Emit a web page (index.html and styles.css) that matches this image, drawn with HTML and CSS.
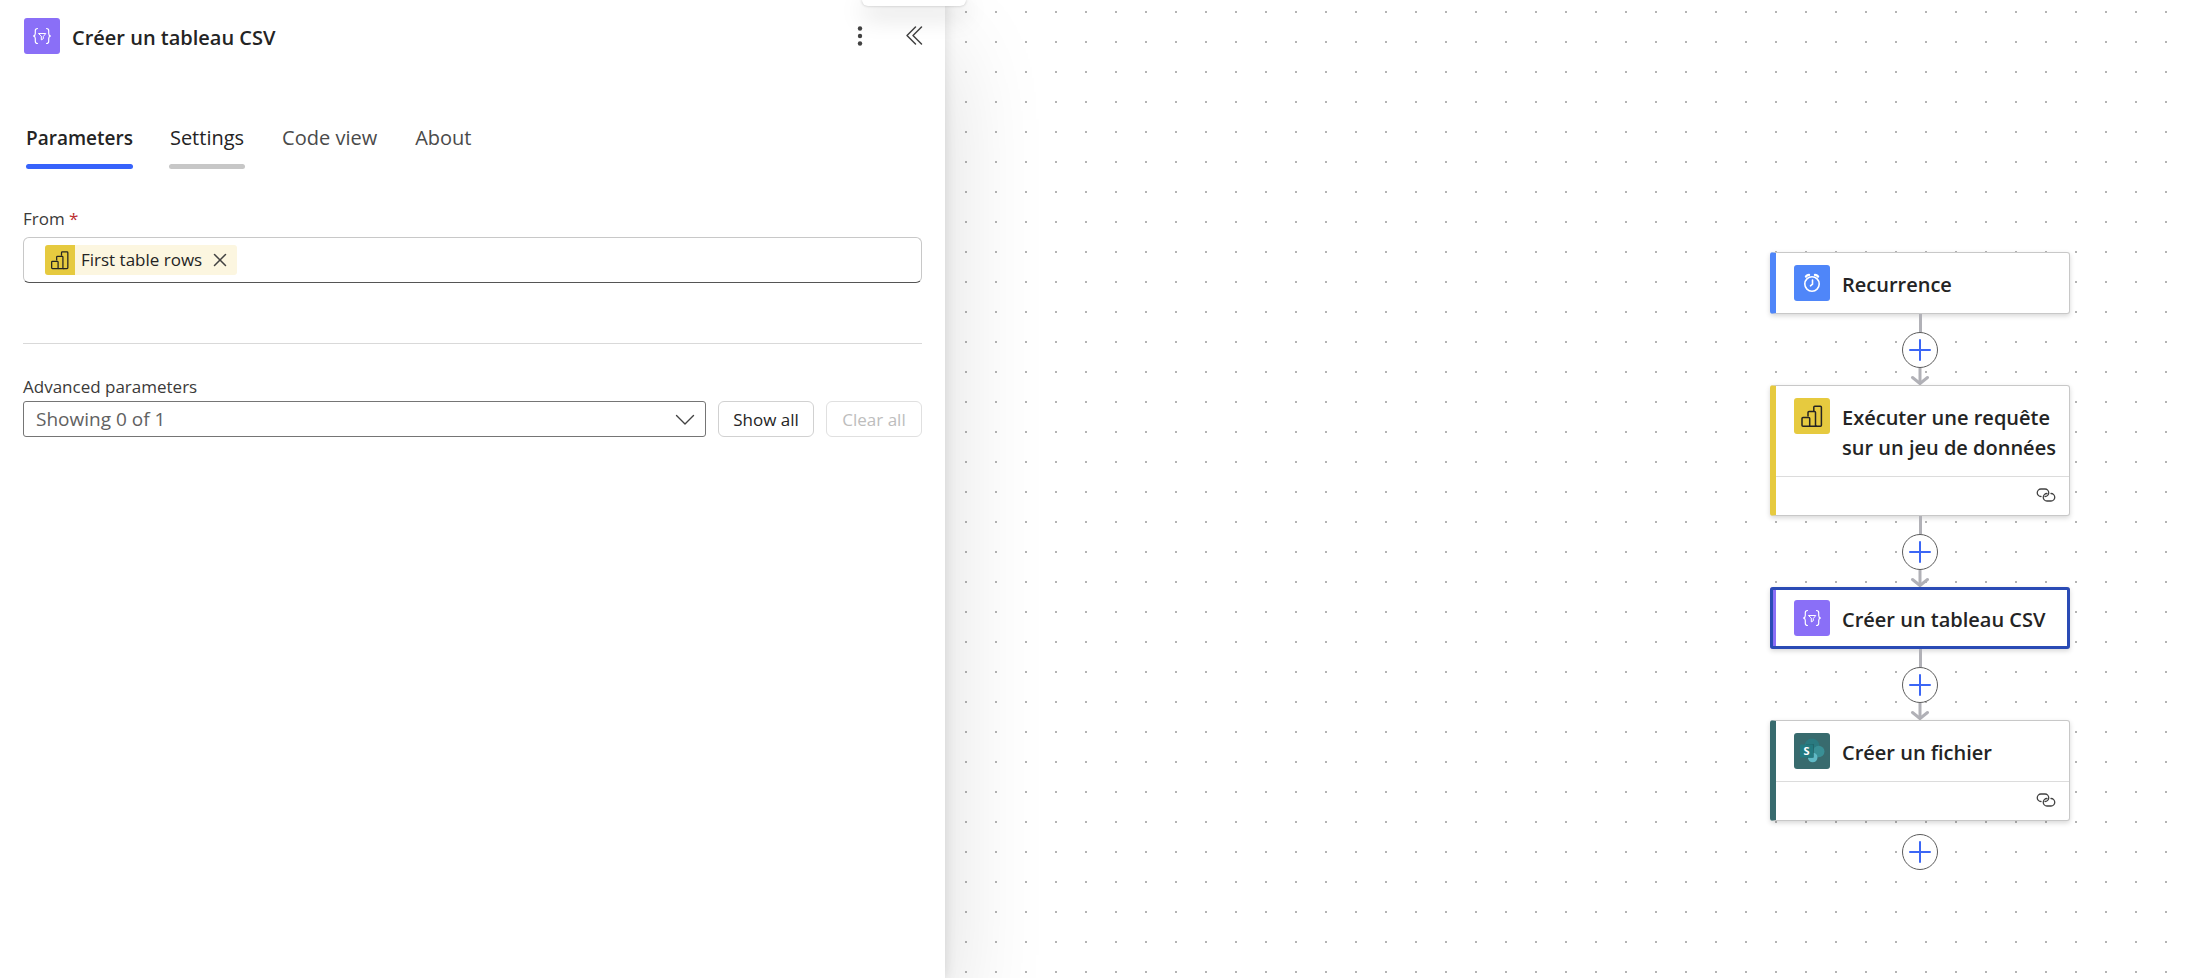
FILE: index.html
```html
<!DOCTYPE html>
<html lang="fr">
<head>
    <meta charset="UTF-8">
    <meta name="viewport" content="width=device-width, initial-scale=1.0">
    <title>Créer un tableau CSV</title>
    <link rel="stylesheet" href="styles.css">
</head>
<body>

    <!-- Icônes partagées -->
    <svg class="sprite" aria-hidden="true">
        <symbol id="icon-csv" viewBox="0 0 36 36">
            <g fill="none" stroke="#fff" stroke-linecap="round" stroke-linejoin="round">
                <path stroke-width="1.2" d="M13.500 10.500c-1.800 0-2.200.8-2.200 2.200v2.800c0 1.500-.6 2.200-1.800 2.500 1.200.3 1.800 1 1.800 2.500v2.800c0 1.400.4 2.200 2.200 2.200"/>
                <path stroke-width="1.2" d="M22.500 10.500c1.800 0 2.200.8 2.200 2.200v2.800c0 1.500.6 2.200 1.800 2.500-1.200.3-1.800 1-1.800 2.500v2.800c0 1.400-.4 2.200-2.200 2.200"/>
                <path stroke-width="1" d="M14.800 15.500h7l-2.500 3v2.200l-2 1.200v-3.400z"/>
            </g>
        </symbol>
        <symbol id="icon-powerbi" viewBox="0 0 36 36">
            <g fill="none" stroke="#252423" stroke-width="1.500" stroke-linejoin="round">
                <path d="M19.800 13V9.300q0-1 1-1h5.600q1 0 1 1v18q0 1-1 1H22"/>
                <path d="M14 18.500V14.500q0-1 1-1h5.500q1 0 1 1v13.800"/>
                <path d="M9 19.500h5.700q1 0 1 1v7.800H9q-1 0-1-1v-6.800q0-1 1-1z"/>
                <path d="M15.700 28.300H23"/>
            </g>
        </symbol>
        <symbol id="icon-clock" viewBox="0 0 36 36">
            <g fill="none" stroke="#fff" stroke-linecap="round">
                <circle cx="18" cy="19" r="7.200" stroke-width="1.600"/>
                <path stroke-width="1.600" d="M18.500 15v4.200l-2 1.600"/>
                <path stroke-width="2.400" d="M12 11.500q1.200-1.500 3-1.600M24 11.500q-1.200-1.500-3-1.600"/>
            </g>
        </symbol>
        <symbol id="icon-sharepoint" viewBox="0 0 36 36">
            <circle cx="18" cy="13" r="7.500" fill="#2b7a80"/>
            <circle cx="24.700" cy="18.500" r="5.800" fill="#398f95"/>
            <circle cx="18.700" cy="24.500" r="4.800" fill="#5fb9c5"/>
            <path fill="#1d5a5f" opacity=".6" d="M12 11h8v12.500q0 1.500-1.500 1.500H13z"/>
            <rect x="6" y="11.500" width="13" height="13" rx="1" fill="#237a80"/>
            <text x="12.500" y="22" text-anchor="middle" class="sp-letter">S</text>
        </symbol>
        <symbol id="icon-link" viewBox="0 0 20 14">
            <g fill="none" stroke="#424242" stroke-width="1.300" stroke-linecap="round">
                <path d="M5 8.500a3.750 3.750 0 0 1 0-7.500h4a3.750 3.750 0 0 1 0 7.500"/>
                <path d="M15 5.500a3.750 3.750 0 0 1 0 7.500h-4a3.750 3.750 0 0 1 0-7.500"/>
            </g>
        </symbol>
        <symbol id="icon-plus" viewBox="0 0 22 22">
            <path fill="none" stroke="#3b66f5" stroke-width="2" stroke-linecap="round" d="M11 1v20M1 11h20"/>
        </symbol>
        <symbol id="icon-arrow" viewBox="0 0 20 17">
            <g fill="none" stroke="#b1b1b7" stroke-width="3">
                <path d="M10 0v15"/>
                <path stroke-linecap="round" stroke-linejoin="round" d="M2.500 9.500l7.500 6 7.500-6"/>
            </g>
        </symbol>
    </svg>

    <div class="designer">

        <!-- Panneau de l'action -->
        <aside class="panel">
            <header class="panel-header">
                <svg class="app-icon app-icon-csv"><use href="#icon-csv"/></svg>
                <h1>Créer un tableau CSV</h1>
                <button type="button" class="icon-button" aria-label="Plus d'options">
                    <svg width="20" height="24" viewBox="0 0 20 24" fill="#424242">
                        <circle cx="10" cy="4.500" r="2.200"/>
                        <circle cx="10" cy="12" r="2.200"/>
                        <circle cx="10" cy="19.500" r="2.200"/>
                    </svg>
                </button>
                <button type="button" class="icon-button" aria-label="Réduire">
                    <svg width="20" height="24" viewBox="0 0 20 24" fill="none" stroke="#424242" stroke-width="1.500" stroke-linecap="round" stroke-linejoin="round">
                        <path d="M11.500 3L3 11.500l8.500 8.500M17.500 3L9 11.500l8.500 8.500"/>
                    </svg>
                </button>
            </header>

            <div class="tabs" role="tablist">
                <button type="button" role="tab" class="tab tab-selected" aria-selected="true">Parameters</button>
                <button type="button" role="tab" class="tab tab-hover">Settings</button>
                <button type="button" role="tab" class="tab">Code view</button>
                <button type="button" role="tab" class="tab">About</button>
            </div>

            <form class="parameters">
                <label for="from">From <span class="required">*</span></label>
                <div class="token-field">
                    <span class="token">
                        <svg class="token-icon"><use href="#icon-powerbi"/></svg>
                        <span class="token-text">First table rows</span>
                        <button type="button" class="token-remove" aria-label="Supprimer">
                            <svg width="14" height="14" viewBox="0 0 14 14" fill="none" stroke="#424242" stroke-width="1.500" stroke-linecap="round">
                                <path d="M1.500 1.500l11 11M12.500 1.500l-11 11"/>
                            </svg>
                        </button>
                    </span>
                    <input type="text" id="from">
                </div>

                <hr>

                <label for="advanced">Advanced parameters</label>
                <div class="advanced-row">
                    <div class="select-box">
                        <select id="advanced">
                            <option>Showing 0 of 1</option>
                        </select>
                        <svg class="chevron" width="20" height="12" viewBox="0 0 20 12" fill="none" stroke="#424242" stroke-width="1.400" stroke-linecap="round" stroke-linejoin="round">
                            <path d="M1.500 1.500L10 10l8.500-8.500"/>
                        </svg>
                    </div>
                    <button type="button" class="button">Show all</button>
                    <button type="button" class="button" disabled>Clear all</button>
                </div>
            </form>
        </aside>

        <!-- Flux -->
        <main class="canvas">
            <div class="flow">
                <article class="card card-recurrence">
                    <div class="card-title">
                        <svg class="app-icon app-icon-recurrence"><use href="#icon-clock"/></svg>
                        <h2>Recurrence</h2>
                    </div>
                </article>

                <div class="connector">
                    <button type="button" class="add" aria-label="Ajouter"><svg><use href="#icon-plus"/></svg></button>
                    <svg class="arrow"><use href="#icon-arrow"/></svg>
                </div>

                <article class="card card-powerbi">
                    <div class="card-title">
                        <svg class="app-icon app-icon-powerbi"><use href="#icon-powerbi"/></svg>
                        <h2>Exécuter une requête sur un jeu de données</h2>
                    </div>
                    <div class="card-footer"><svg class="link-icon"><use href="#icon-link"/></svg></div>
                </article>

                <div class="connector">
                    <button type="button" class="add" aria-label="Ajouter"><svg><use href="#icon-plus"/></svg></button>
                    <svg class="arrow"><use href="#icon-arrow"/></svg>
                </div>

                <article class="card card-csv card-selected">
                    <div class="card-title">
                        <svg class="app-icon app-icon-csv"><use href="#icon-csv"/></svg>
                        <h2>Créer un tableau CSV</h2>
                    </div>
                </article>

                <div class="connector">
                    <button type="button" class="add" aria-label="Ajouter"><svg><use href="#icon-plus"/></svg></button>
                    <svg class="arrow"><use href="#icon-arrow"/></svg>
                </div>

                <article class="card card-sharepoint">
                    <div class="card-title">
                        <svg class="app-icon app-icon-sharepoint"><use href="#icon-sharepoint"/></svg>
                        <h2>Créer un fichier</h2>
                    </div>
                    <div class="card-footer"><svg class="link-icon"><use href="#icon-link"/></svg></div>
                </article>

                <button type="button" class="add add-last" aria-label="Ajouter"><svg><use href="#icon-plus"/></svg></button>
            </div>
        </main>

        <!-- Bas de l'info-bulle de la barre d'outils -->
        <div class="tooltip-edge"></div>
    </div>

</body>
</html>
```

FILE: styles.css
```css
* {
    box-sizing: border-box;
}
body {
    margin: 0;
    font-family: 'Open Sans', 'Noto Sans', sans-serif;
    color: #242424;
    background-color: #ffffff;
}
button, input, select {
    font-family: inherit;
    color: inherit;
}
button {
    padding: 0;
    border: none;
    background: none;
    cursor: pointer;
}
h1, h2 {
    margin: 0;
    font-size: 20px;
    font-weight: 600;
    line-height: 30px;
}
.sprite {
    display: none;
}
.designer {
    position: relative;
    display: flex;
    min-height: 100vh;
    overflow: hidden;
}

/* Panneau */
.panel {
    position: relative;
    z-index: 1;
    flex: 0 0 945px;
    padding: 18px 23px;
    background-color: #ffffff;
    box-shadow: 0 0 12px rgba(0, 0, 0, 0.12), 0 48px 96px rgba(0, 0, 0, 0.14);
}
.panel-header {
    display: flex;
    align-items: center;
    padding-left: 1px;
}
.panel-header h1 {
    flex: 1;
    padding: 3px 0 0 12px;
}
.icon-button {
    display: flex;
    justify-content: center;
    width: 32px;
    margin-left: 22px;
}
.icon-button:last-child {
    margin-right: -8px;
}
.app-icon {
    flex: none;
    width: 36px;
    height: 36px;
    border-radius: 3px;
}
.app-icon-csv {
    background-color: #8a6ff7;
}
.app-icon-recurrence {
    background-color: #4f86f9;
}
.app-icon-powerbi {
    background-color: #e6ca3f;
}
.app-icon-sharepoint {
    background-color: #386b6e;
}
.sp-letter {
    font-size: 11px;
    font-weight: 700;
    fill: #ffffff;
}

/* Onglets */
.tabs {
    display: flex;
    gap: 36px;
    margin-top: 68px;
    padding-left: 3px;
}
.tab {
    position: relative;
    height: 47px;
    padding: 0 1px 16px;
    font-size: 20px;
    line-height: 26px;
    color: #4a4a4a;
}
.tab::after {
    content: "";
    position: absolute;
    left: 0;
    right: 0;
    bottom: 0;
    height: 5px;
    border-radius: 3px;
}
.tab-selected {
    padding: 0 0 16px;
    font-size: 19px;
    font-weight: 600;
    color: #242424;
}
.tab-selected::after {
    background-color: #3763fb;
}
.tab-hover {
    color: #242424;
}
.tab-hover::after {
    background-color: #c7c7c7;
}

/* Paramètres */
.parameters {
    margin-top: 38px;
}
.parameters label {
    display: block;
    font-size: 17px;
    line-height: 24px;
    color: #3b3a39;
}
.required {
    color: #bc2f32;
}
.token-field {
    display: flex;
    align-items: center;
    height: 46px;
    margin-top: 6px;
    padding-left: 21px;
    border: 1px solid #c8c8c8;
    border-bottom-color: #555555;
    border-radius: 6px;
}
.token-field input {
    flex: 1;
    height: 30px;
    border: none;
    outline: none;
    font-size: 17px;
    background: none;
}
.token {
    display: flex;
    align-items: center;
    height: 30px;
    border-radius: 3px;
    background-color: #fcf6e0;
    overflow: hidden;
}
.token-icon {
    width: 30px;
    height: 30px;
    background-color: #e6ca3f;
}
.token-text {
    padding-left: 6px;
    font-size: 17px;
    line-height: 24px;
}
.token-remove {
    display: flex;
    justify-content: center;
    width: 35px;
}
hr {
    margin: 60px 0 31px;
    border: none;
    border-top: 1px solid #d9d9d9;
}
.advanced-row {
    display: flex;
    gap: 12px;
    margin-top: 2px;
}
.select-box {
    position: relative;
    flex: 1;
}
.select-box select {
    display: block;
    width: 100%;
    height: 36px;
    padding: 0 48px 0 12px;
    border: 1px solid #757575;
    border-radius: 3px;
    appearance: none;
    font-size: 19px;
    color: #616161;
    background-color: #ffffff;
}
.chevron {
    position: absolute;
    top: 13px;
    right: 11px;
    pointer-events: none;
}
.button {
    width: 96px;
    height: 36px;
    border: 1px solid #d1d1d1;
    border-radius: 6px;
    font-size: 17px;
    background-color: #ffffff;
}
.button:disabled {
    border-color: #e0e0e0;
    color: #bdbdbd;
    cursor: default;
}

/* Zone de dessin à points */
.canvas {
    display: flex;
    flex: 1;
    justify-content: flex-end;
    padding: 252px 124px 40px 0;
    background-image: radial-gradient(circle at 1px 1px, #b4b4b4 1px, transparent 1px);
    background-size: 30px 30px;
    background-position: 20px 11px;
}
.flow {
    display: flex;
    flex-direction: column;
    align-items: center;
    width: 300px;
}
.card {
    width: 100%;
    border: 1px solid #c8c8c8;
    border-left: 6px solid #c8c8c8;
    border-radius: 3px;
    background-color: #ffffff;
    box-shadow: 0 2px 5px rgba(0, 0, 0, 0.16);
}
.card-recurrence {
    border-left-color: #4f86f9;
}
.card-powerbi {
    border-left-color: #e6ca3f;
}
.card-csv {
    border-left-color: #8a6ff7;
}
.card-sharepoint {
    border-left-color: #386b6e;
}
.card-selected {
    outline: 3px solid #2a4bb5;
    outline-offset: -3px;
}
.card-title {
    display: flex;
    gap: 12px;
    padding: 12px 6px 12px 18px;
}
.card-title h2 {
    padding: 5px 0 1px;
}
.card-footer {
    display: flex;
    justify-content: flex-end;
    padding: 11px 13px 13px 0;
    border-top: 1px solid #dcdcdc;
}
.link-icon {
    width: 20px;
    height: 14px;
}

/* Liaisons entre les cartes */
.connector {
    display: flex;
    flex-direction: column;
    align-items: center;
    width: 100%;
    height: 71px;
}
.connector::before {
    content: "";
    width: 3px;
    height: 18px;
    background-color: #b1b1b7;
}
.add {
    display: flex;
    align-items: center;
    justify-content: center;
    width: 36px;
    height: 36px;
    border: 1px solid #5c5c5c;
    border-radius: 50%;
    background-color: #ffffff;
}
.add svg {
    width: 22px;
    height: 22px;
}
.arrow {
    width: 20px;
    height: 17px;
}
.add-last {
    margin-top: 13px;
}

.tooltip-edge {
    position: absolute;
    z-index: 2;
    top: 0;
    left: 862px;
    width: 104px;
    height: 6px;
    border-radius: 0 0 6px 6px;
    background-color: #ffffff;
    box-shadow: 0 0 3px rgba(0, 0, 0, 0.24), 0 8px 24px rgba(0, 0, 0, 0.28);
}
```
